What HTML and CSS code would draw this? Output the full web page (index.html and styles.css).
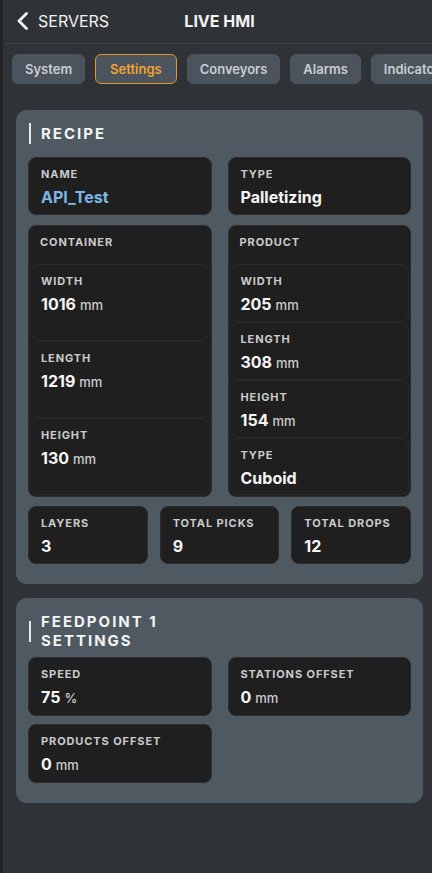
FILE: index.html
```html
<!DOCTYPE html>
<html lang="en">
<head>
    <meta charset="UTF-8">
    <meta name="viewport" content="width=device-width, initial-scale=1.0">
    <title>Live HMI</title>
    <link rel="stylesheet" href="styles.css">
</head>
<body>
    <div class="app">
        <header class="topbar">
            <a class="back" href="#">
                <svg width="13" height="18" viewBox="0 0 13 18"><path d="M10.5 1.5 L3 9 L10.5 16.5" fill="none" stroke="#f2f2f2" stroke-width="2.8" stroke-linecap="round" stroke-linejoin="round"/></svg>
                <span>SERVERS</span>
            </a>
            <div class="title">LIVE HMI</div>
            <div></div>
        </header>

        <nav class="tabs">
            <button class="tab">System</button>
            <button class="tab active">Settings</button>
            <button class="tab">Conveyors</button>
            <button class="tab">Alarms</button>
            <button class="tab">Indicators</button>
        </nav>

        <main class="content">
            <section class="panel">
                <h2 class="panel-title"><span class="bar"></span><span class="title-text">RECIPE</span></h2>
                <div class="grid-2">
                    <div class="card">
                        <div class="label">NAME</div>
                        <div class="value link">API_Test</div>
                    </div>
                    <div class="card">
                        <div class="label">TYPE</div>
                        <div class="value">Palletizing</div>
                    </div>
                    <div class="card group">
                        <div class="label group-label">CONTAINER</div>
                        <div class="group-list">
                            <div class="card inner">
                                <div class="label">WIDTH</div>
                                <div class="value">1016<span class="unit">mm</span></div>
                            </div>
                            <div class="card inner">
                                <div class="label">LENGTH</div>
                                <div class="value">1219<span class="unit">mm</span></div>
                            </div>
                            <div class="card inner">
                                <div class="label">HEIGHT</div>
                                <div class="value">130<span class="unit">mm</span></div>
                            </div>
                        </div>
                    </div>
                    <div class="card group">
                        <div class="label group-label">PRODUCT</div>
                        <div class="group-list">
                            <div class="card inner">
                                <div class="label">WIDTH</div>
                                <div class="value">205<span class="unit">mm</span></div>
                            </div>
                            <div class="card inner">
                                <div class="label">LENGTH</div>
                                <div class="value">308<span class="unit">mm</span></div>
                            </div>
                            <div class="card inner">
                                <div class="label">HEIGHT</div>
                                <div class="value">154<span class="unit">mm</span></div>
                            </div>
                            <div class="card inner">
                                <div class="label">TYPE</div>
                                <div class="value">Cuboid</div>
                            </div>
                        </div>
                    </div>
                </div>
                <div class="grid-3">
                    <div class="card">
                        <div class="label">LAYERS</div>
                        <div class="value">3</div>
                    </div>
                    <div class="card">
                        <div class="label">TOTAL PICKS</div>
                        <div class="value">9</div>
                    </div>
                    <div class="card">
                        <div class="label">TOTAL DROPS</div>
                        <div class="value">12</div>
                    </div>
                </div>
            </section>

            <section class="panel">
                <h2 class="panel-title wrap"><span class="bar"></span><span class="title-text narrow">FEEDPOINT 1 SETTINGS</span></h2>
                <div class="grid-2 tight">
                    <div class="card">
                        <div class="label">SPEED</div>
                        <div class="value">75<span class="unit">%</span></div>
                    </div>
                    <div class="card">
                        <div class="label">STATIONS OFFSET</div>
                        <div class="value">0<span class="unit">mm</span></div>
                    </div>
                    <div class="card">
                        <div class="label">PRODUCTS OFFSET</div>
                        <div class="value">0<span class="unit">mm</span></div>
                    </div>
                </div>
            </section>
        </main>
    </div>
</body>
</html>
```

FILE: styles.css
```css
* {
    box-sizing: border-box;
}
body {
    margin: 0;
    font-family: Inter, "Noto Sans", sans-serif;
    background-color: #2f3337;
    color: #f2f2f2;
}
.app {
    min-height: 873px;
    border-left: 3px solid #232528;
    overflow: hidden;
}
.topbar {
    display: grid;
    grid-template-columns: 1fr auto 1fr;
    align-items: center;
    height: 44px;
    padding: 0 13px;
    border-bottom: 1px solid #3a3f44;
}
.back {
    display: flex;
    align-items: center;
    gap: 9px;
    color: #f2f2f2;
    text-decoration: none;
    font-size: 16px;
    margin-top: -2px;
}
.title {
    font-size: 16px;
    font-weight: 700;
    margin-top: -2px;
    margin-left: 4px;
}
.tabs {
    display: flex;
    gap: 10px;
    padding: 10px 9px 0;
    white-space: nowrap;
}
.tab {
    flex: none;
    height: 30px;
    padding: 0 12px;
    background-color: #4b545c;
    color: #c9ced3;
    border: 1px solid #4b545c;
    border-radius: 6px;
    font-family: inherit;
    font-size: 13px;
    font-weight: 600;
}
.tab.active {
    color: #f3a233;
    border-color: #e0962c;
    padding: 0 14px;
}
.content {
    padding: 26px 9px 40px 13px;
    display: flex;
    flex-direction: column;
    gap: 14px;
}
.panel {
    background-color: #4f5962;
    border-radius: 11px;
    padding: 12px 12px 20px;
}
.panel-title {
    display: flex;
    align-items: center;
    gap: 10px;
    min-height: 22px;
    margin: 0 0 13px;
    font-size: 15px;
    font-weight: 700;
    line-height: 19px;
    letter-spacing: 2px;
    color: #f4f4f4;
}
.panel-title.wrap {
    margin: 2px 0 7px;
}
.bar {
    width: 2px;
    height: 21px;
    margin-left: 1px;
    background-color: #e6e6e6;
    flex: none;
}
.title-text.narrow {
    max-width: 150px;
}
.grid-2 {
    display: grid;
    grid-template-columns: 1fr 1fr;
    column-gap: 16px;
    row-gap: 10px;
}
.grid-2.tight {
    row-gap: 8px;
}
.grid-3 {
    display: grid;
    grid-template-columns: 1fr 1fr 1fr;
    gap: 12px;
    margin-top: 9px;
}
.card {
    background-color: #1f1f1f;
    border: 1px solid #2c2c2c;
    border-radius: 8px;
    padding: 9px 12px 6px;
}
.label {
    font-size: 11px;
    font-weight: 700;
    line-height: 14px;
    letter-spacing: 0.9px;
    color: #cbcbcb;
}
.value {
    margin-top: 6px;
    font-size: 16px;
    font-weight: 700;
    line-height: 21px;
    color: #f6f6f6;
}
.value.link {
    color: #7cb6e8;
}
.unit {
    font-size: 13px;
    font-weight: 500;
    color: #cdcdcd;
    margin-left: 4px;
}
.card.group {
    display: flex;
    flex-direction: column;
    padding: 9px 1px 1px;
}
.group-label {
    padding: 0 10px;
}
.group-list {
    flex: 1;
    display: flex;
    flex-direction: column;
    margin-top: 15px;
}
.card.inner {
    flex: 1;
    border-color: #2a2a2a;
    border-radius: 9px;
    padding: 9px 12px 5px 10px;
}
```
